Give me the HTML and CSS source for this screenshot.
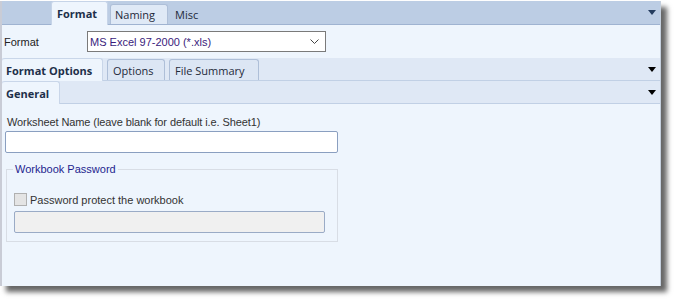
FILE: index.html
```html
<!DOCTYPE html>
<html>
<head>
<meta charset="utf-8">
<link rel="stylesheet" href="styles.css">
</head>
<body>
<div class="panel">
  <div class="strip top">
    <div class="tabs top-tabs">
      <div class="tab active">Format</div>
      <div class="tab boxed">Naming</div>
      <div class="tab plain">Misc</div>
    </div>
    <span class="arrow navy"></span>
  </div>
  <div class="format-row">
    <span class="label">Format</span>
    <div class="select">
      <span class="select-text">MS Excel 97-2000 (*.xls)</span>
      <svg class="chev" width="9" height="6" viewBox="0 0 9 6"><path d="M0.5 0.5 L4.5 4.5 L8.5 0.5" fill="none" stroke="#444" stroke-width="1"/></svg>
    </div>
  </div>
  <div class="strip sub">
    <div class="tabs">
      <div class="tab active first">Format Options</div>
      <div class="tab boxed w-options">Options</div>
      <div class="tab boxed w-summary">File Summary</div>
    </div>
    <span class="arrow black"></span>
  </div>
  <div class="strip sub sub2">
    <div class="tabs">
      <div class="tab active first general">General</div>
    </div>
    <span class="arrow black"></span>
  </div>
  <div class="content">
    <div class="field-label">Worksheet Name (leave blank for default i.e. Sheet1)</div>
    <div class="input"></div>
    <fieldset class="group">
      <legend>Workbook Password</legend>
      <label class="check"><span class="box"></span>Password protect the workbook</label>
      <div class="input disabled"></div>
    </fieldset>
  </div>
</div>
</body>
</html>
```
FILE: styles.css
```css
html, body {
  margin: 0;
  padding: 0;
  background: #ffffff;
}
body {
  height: 301px;
  font-family: "Liberation Sans", Arial, sans-serif;
  font-size: 11px;
  color: #222;
}
.panel {
  width: 661px;
  height: 285px;
  margin-top: 1px;
  background: #eef5fd;
  border-left: 2px solid #c9ccd6;
  border-right: 1px solid #c4cfdd;
  box-sizing: border-box;
  box-shadow: 6px 6px 5px rgba(0,0,0,0.6);
  display: flex;
  flex-direction: column;
}
.strip {
  display: flex;
  align-items: flex-end;
  justify-content: space-between;
  flex: none;
}
.strip.top {
  height: 24px;
  box-sizing: border-box;
  background: #bccde4;
  border-bottom: 1px solid #9fb3d1;
}
.tabs {
  display: flex;
  align-items: flex-end;
  height: 100%;
}
.top-tabs {
  padding-left: 49px;
}
.tab {
  font-family: "Open Sans", "Noto Sans", sans-serif;
  font-size: 11px;
  color: #1e2a3a;
  box-sizing: border-box;
  display: flex;
  align-items: center;
  justify-content: flex-start;
  padding-left: 4px;
}
.strip.top .tab.active {
  width: 57px;
  height: 24px;
  margin-bottom: -1px;
  padding-left: 5px;
  background: #eef5fd;
  border: 1px solid #c6d4e8;
  border-bottom: none;
  border-radius: 3px 3px 0 0;
  font-weight: 700;
  color: #1d2f4a;
}
.strip.top .tab.boxed {
  width: 58px;
  height: 20px;
  margin-left: 2px;
  margin-bottom: 0;
  background: #dfe9f6;
  border: 1px solid #aebfd8;
  border-bottom: none;
  border-radius: 3px 3px 0 0;
}
.strip.top .tab.plain {
  width: 38px;
  height: 20px;
  padding-left: 7px;
}
.arrow {
  width: 0;
  height: 0;
  border-left: 4.5px solid transparent;
  border-right: 4.5px solid transparent;
  align-self: center;
}
.arrow.navy {
  border-top: 5px solid #243c5e;
  margin-right: 4px;
}
.arrow.black {
  border-top: 5px solid #000;
  margin-right: 4px;
}
.format-row {
  height: 33px;
  flex: none;
  display: flex;
  align-items: center;
  padding-left: 2px;
  box-sizing: border-box;
}
.label {
  font-size: 11px;
  width: 83px;
  color: #222;
}
.select {
  width: 239px;
  height: 21px;
  box-sizing: border-box;
  background: #fff;
  border: 1px solid #7a7a7a;
  display: flex;
  align-items: center;
  justify-content: space-between;
  padding: 0 6px 0 2px;
}
.select-text {
  font-size: 11px;
  color: #3a1c7c;
}
.chev {
  display: block;
}
.strip.sub {
  height: 23px;
  background: #dfe8f5;
  border-bottom: 1px solid #c1d0e5;
  box-sizing: border-box;
}
.strip.sub .tab {
  height: 21px;
  border: 1px solid #aebfd8;
  border-bottom: none;
  border-radius: 3px 3px 0 0;
  background: #dce6f4;
  margin-left: 4px;
  padding-left: 5px;
}
.strip.sub .tab.active {
  height: 23px;
  margin-bottom: -1px;
  background: #eef5fd;
  border-color: #c9d6e9;
  font-weight: 700;
  color: #1d2f4a;
}
.strip.sub .tab.first {
  margin-left: 0;
  border-left: none;
  width: 101px;
  padding-left: 4px;
}
.w-options { width: 58px; }
.w-summary { width: 90px; }
.strip.sub .tab.general { width: 58px; }
.content {
  flex: 1;
  padding: 12px 0 0 3px;
}
.field-label {
  font-size: 11px;
  letter-spacing: -0.1px;
  color: #333;
  line-height: 13px;
  margin-left: 2px;
}
.input {
  width: 333px;
  height: 22px;
  box-sizing: border-box;
  background: #fff;
  border: 1px solid #8a9fc0;
  border-radius: 2px;
  margin-top: 2px;
}
.group {
  width: 332px;
  height: 79px;
  box-sizing: border-box;
  margin: 10px 0 0 1px;
  padding: 0 0 0 7px;
  border: 1px solid #d8dde5;
  min-width: 0;
}
.group legend {
  font-size: 11px;
  line-height: 13px;
  color: #1f1f8f;
  padding: 0 2px;
  margin-left: -1px;
}
.check {
  display: flex;
  align-items: center;
  margin-top: 17px;
  height: 13px;
  font-size: 11px;
  color: #333;
}
.box {
  width: 13px;
  height: 13px;
  box-sizing: border-box;
  border: 1px solid #b0b0b0;
  background: #e4e4e4;
  margin-right: 3px;
}
.input.disabled {
  width: 311px;
  margin-top: 5px;
  background: #f0f0f0;
  border-color: #9aabc6;
}
```
